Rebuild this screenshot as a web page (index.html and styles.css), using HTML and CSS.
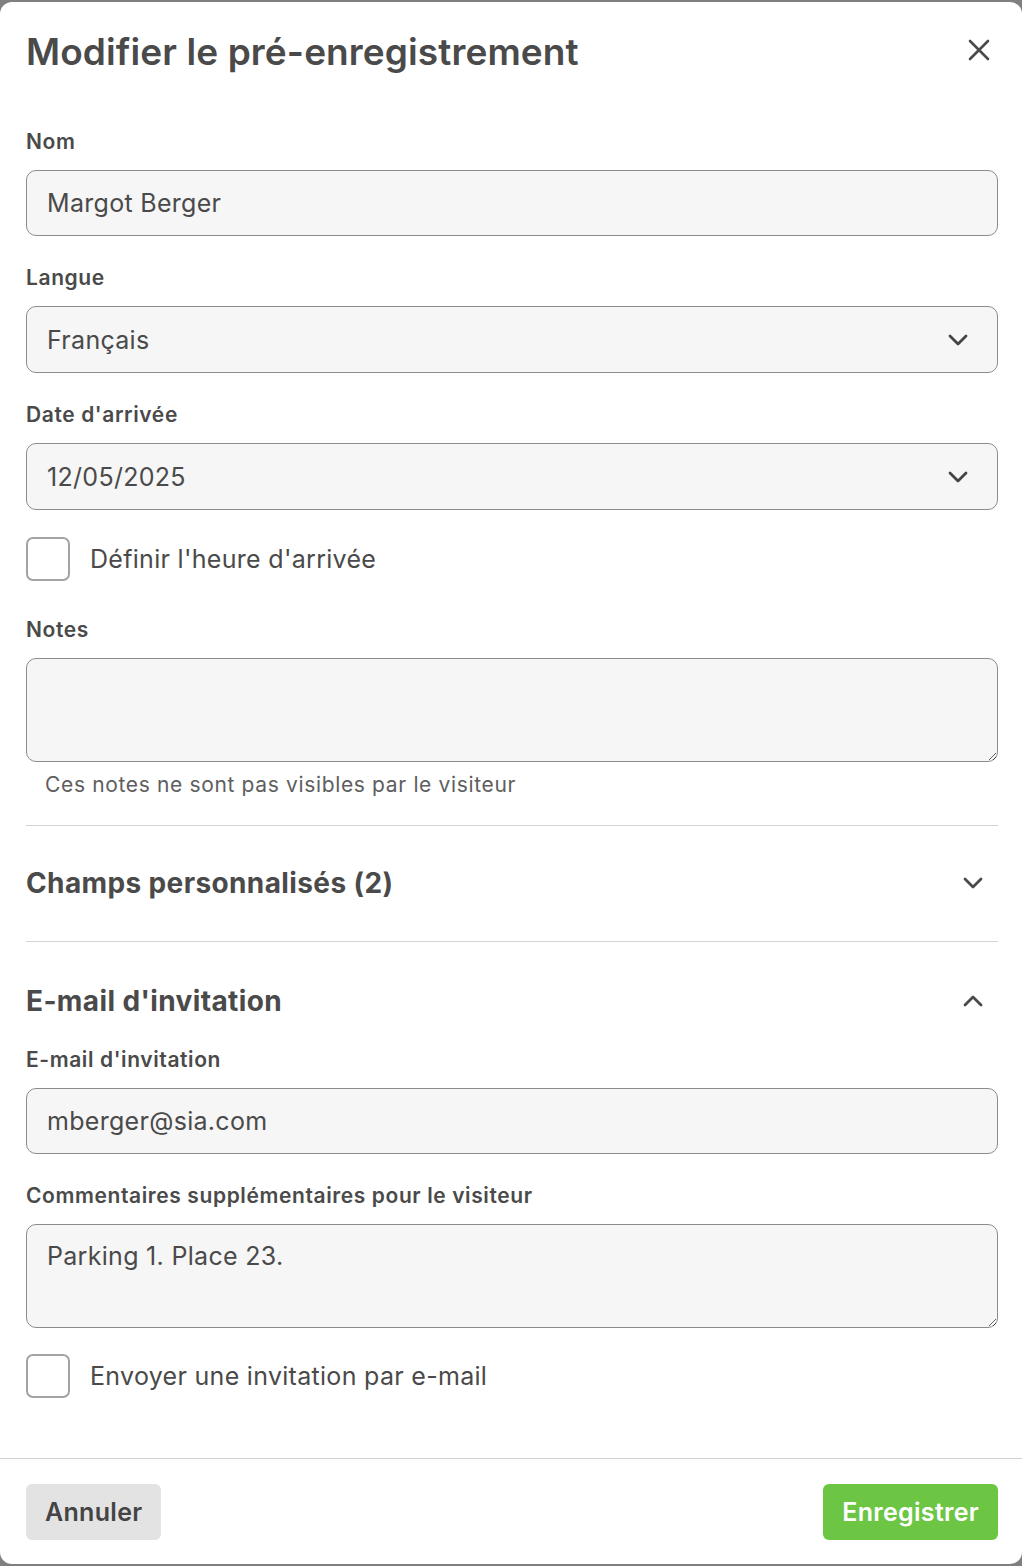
FILE: index.html
```html
<!DOCTYPE html>
<html lang="fr">
<head>
    <meta charset="UTF-8">
    <meta name="viewport" content="width=device-width, initial-scale=1.0">
    <title>Modifier le pré-enregistrement</title>
    <link rel="stylesheet" href="styles.css">
</head>
<body>

    <div class="modal">
        <div class="modal-header">
            <h1>Modifier le pré-enregistrement</h1>
            <button class="close-btn" aria-label="Fermer">
                <svg width="24" height="24" viewBox="0 0 24 24"><path d="M3 3L21 21M21 3L3 21" stroke="#4a4a4a" stroke-width="2.6" stroke-linecap="round"/></svg>
            </button>
        </div>

        <div class="modal-body">
            <div class="field">
                <label for="name">Nom</label>
                <input type="text" id="name" value="Margot Berger">
            </div>

            <div class="field">
                <label for="lang">Langue</label>
                <div class="select">
                    <span>Français</span>
                    <svg width="22" height="14" viewBox="0 0 22 14"><path d="M3 3L11 11L19 3" fill="none" stroke="#444" stroke-width="2.8" stroke-linecap="round" stroke-linejoin="round"/></svg>
                </div>
            </div>

            <div class="field">
                <label for="date">Date d'arrivée</label>
                <div class="select">
                    <span>12/05/2025</span>
                    <svg width="22" height="14" viewBox="0 0 22 14"><path d="M3 3L11 11L19 3" fill="none" stroke="#444" stroke-width="2.8" stroke-linecap="round" stroke-linejoin="round"/></svg>
                </div>
            </div>

            <label class="check first-check">
                <span class="box"></span>
                <span>Définir l'heure d'arrivée</span>
            </label>

            <div class="field notes">
                <label for="notes">Notes</label>
                <textarea id="notes"></textarea>
                <p class="hint">Ces notes ne sont pas visibles par le visiteur</p>
            </div>

            <div class="section">
                <h2>Champs personnalisés (2)</h2>
                <svg width="22" height="14" viewBox="0 0 22 14"><path d="M3 3L11 11L19 3" fill="none" stroke="#4a4a4a" stroke-width="2.8" stroke-linecap="round" stroke-linejoin="round"/></svg>
            </div>

            <div class="section open">
                <h2>E-mail d'invitation</h2>
                <svg width="22" height="14" viewBox="0 0 22 14"><path d="M3 11L11 3L19 11" fill="none" stroke="#4a4a4a" stroke-width="2.8" stroke-linecap="round" stroke-linejoin="round"/></svg>
            </div>

            <div class="field">
                <label for="email">E-mail d'invitation</label>
                <input type="text" id="email" value="mberger@sia.com">
            </div>

            <div class="field comments">
                <label for="comments">Commentaires supplémentaires pour le visiteur</label>
                <textarea id="comments">Parking 1. Place 23.</textarea>
            </div>

            <label class="check">
                <span class="box"></span>
                <span>Envoyer une invitation par e-mail</span>
            </label>
        </div>

        <div class="modal-footer">
            <button class="btn-cancel">Annuler</button>
            <button class="btn-save">Enregistrer</button>
        </div>
    </div>

</body>
</html>
```

FILE: styles.css
```css
* {
    box-sizing: border-box;
}
body {
    margin: 0;
    padding: 2px 0;
    background-color: #7f7f7f;
    font-family: Inter, "Noto Sans", sans-serif;
    color: #4a4a4a;
}
.modal {
    background-color: white;
    border-radius: 12px;
    height: 1562px;
    display: flex;
    flex-direction: column;
}
.modal-header {
    display: flex;
    justify-content: space-between;
    align-items: flex-start;
    padding: 26px 24px 0 26px;
    height: 100px;
}
.modal-header h1 {
    margin: 0;
    font-size: 37px;
    font-weight: 600;
    line-height: 48px;
    letter-spacing: 0.1px;
    color: #4a4a4a;
}
.close-btn {
    background: none;
    border: none;
    padding: 0;
    margin: 10px 7px 0 0;
    cursor: pointer;
    display: flex;
}
.modal-body {
    flex: 1;
    padding: 28px 24px 0 26px;
}
.field {
    margin-bottom: 30px;
}
.field label {
    display: block;
    font-size: 21px;
    font-weight: 600;
    letter-spacing: 0.6px;
    line-height: 24px;
    margin-bottom: 16px;
}
input, textarea, .select {
    display: block;
    width: 100%;
    height: 66px;
    padding: 0 20px;
    font-family: inherit;
    font-size: 25px;
    letter-spacing: 0.3px;
    color: #4a4a4a;
    background-color: #f6f6f6;
    border: 1px solid #8c8c8c;
    border-radius: 10px;
    outline: none;
}
.select {
    display: flex;
    justify-content: space-between;
    align-items: center;
    padding-right: 28px;
    height: 67px;
}
textarea {
    height: 104px;
    padding: 16px 20px;
    resize: vertical;
    line-height: 30px;
}
.check {
    display: flex;
    align-items: center;
    gap: 20px;
    font-size: 25px;
    letter-spacing: 0.3px;
    cursor: pointer;
}
.first-check {
    margin-top: -3px;
    margin-bottom: 37px;
}
.box {
    width: 44px;
    height: 44px;
    border: 2px solid #a3a3a3;
    border-radius: 7px;
    background-color: white;
}
.notes {
    margin-bottom: 0;
}
.hint {
    margin: 11px 0 28px 19px;
    font-size: 21px;
    letter-spacing: 0.65px;
    line-height: 24px;
    color: #5e5e5e;
}
.section {
    display: flex;
    justify-content: space-between;
    align-items: center;
    border-top: 1px solid #d4d4d4;
    padding: 40px 14px 41px 0;
}
.section h2 {
    margin: 0;
    font-size: 28px;
    font-weight: 700;
    line-height: 34px;
    letter-spacing: 0.38px;
}
.section.open {
    padding-top: 42px;
    padding-bottom: 30px;
}
.comments {
    margin-bottom: 26px;
}
.modal-footer {
    display: flex;
    justify-content: space-between;
    border-top: 1px solid #d0d0d0;
    padding: 25px 24px 24px 26px;
}
.modal-footer button {
    height: 56px;
    padding: 0 19px;
    border: none;
    border-radius: 6px;
    font-family: inherit;
    font-size: 25px;
    font-weight: 600;
    letter-spacing: 0.3px;
    cursor: pointer;
}
.btn-cancel {
    background-color: #e3e3e3;
    color: #444;
}
.btn-save {
    background-color: #6cc644;
    color: white;
}
```
